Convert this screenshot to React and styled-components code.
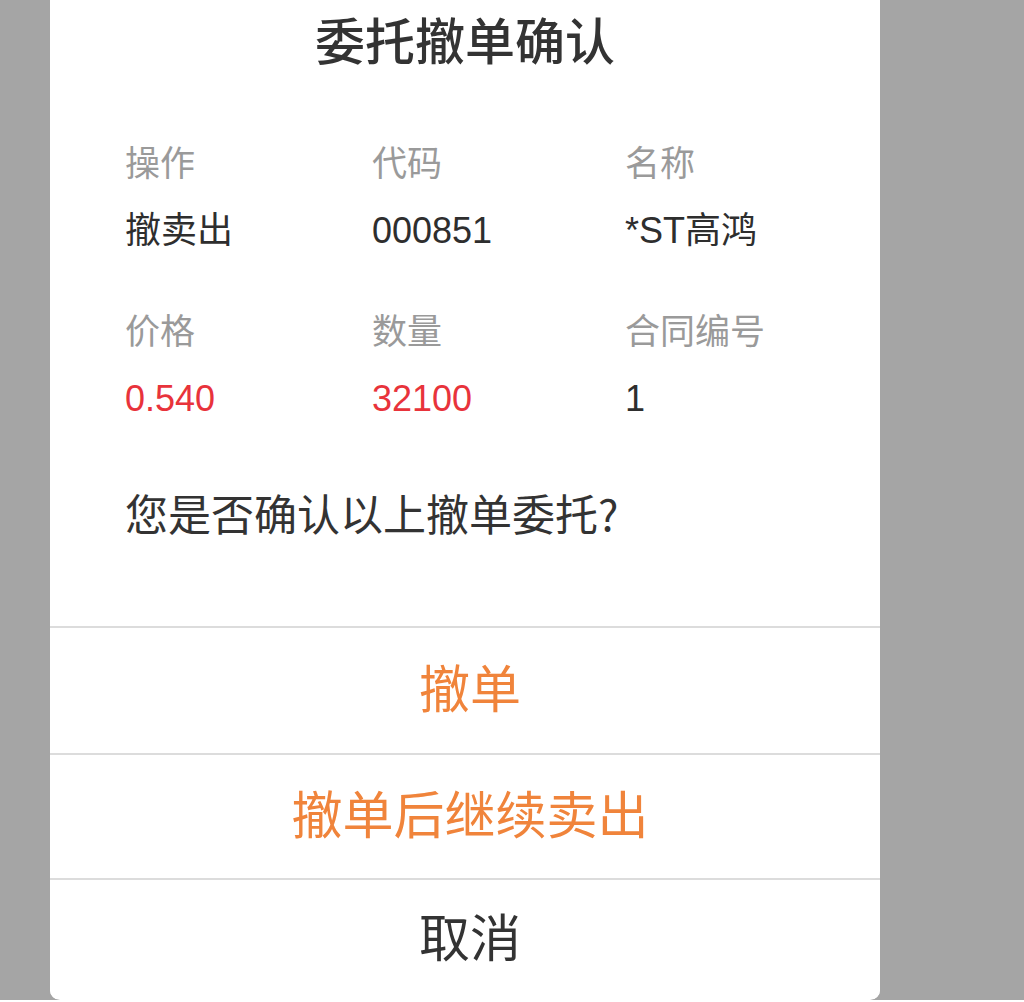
import React from 'react';
import styled, { createGlobalStyle } from 'styled-components';

const Global = createGlobalStyle`
  html, body { margin: 0; padding: 0; background: #fff; }
  * { box-sizing: border-box; }
  body {
    font-family: "Liberation Sans", "Noto Sans CJK SC", sans-serif;
  }
`;

const Overlay = styled.div`
  height: 1000px;
  background: #a5a5a5;
  padding: 0 144px 0 50px;
  overflow: hidden;
`;

const Dialog = styled.div`
  width: 830px;
  height: 1000px;
  background: #fff;
  border-radius: 0 0 10px 10px;
  overflow: hidden;
  display: flex;
  flex-direction: column;
`;

const Title = styled.h1`
  margin: 0;
  padding-top: 3px;
  font-size: 50px;
  line-height: 70px;
  font-weight: 500;
  color: #333;
  text-align: center;
  font-family: "Noto Sans CJK SC", sans-serif;
`;

const Body = styled.div`
  padding: 63px 0 86px 75px;
`;

const Grid = styled.div`
  display: grid;
  grid-template-columns: 247px 253px 1fr;
  row-gap: 48px;
`;

const Cell = styled.div`
  display: flex;
  flex-direction: column;
  gap: 20px;
`;

const Label = styled.div`
  font-size: 35px;
  line-height: 50px;
  color: #9a9a9a;
  font-family: "Noto Sans CJK SC", sans-serif;
`;

const Value = styled.div`
  font-size: 36px;
  line-height: 50px;
  color: ${p => (p.$red ? '#e8333b' : '#2e2e2e')};
`;

const Question = styled.p`
  margin: 60px 0 0;
  font-size: 43px;
  line-height: 56px;
  color: #333;
  font-family: "Noto Sans CJK SC", sans-serif;
`;

const Action = styled.button`
  flex: none;
  height: ${p => p.$h}px;
  border: none;
  border-top: 2px solid #dcdcdc;
  background: #fff;
  padding: 0 0 9px 10px;
  font-size: 51px;
  font-family: "Noto Sans CJK SC", sans-serif;
  color: ${p => (p.$muted ? '#333' : '#f0843b')};
  cursor: pointer;
`;

const info = [
  { label: '操作', value: '撤卖出' },
  { label: '代码', value: '000851' },
  { label: '名称', value: '*ST高鸿' },
  { label: '价格', value: '0.540', red: true },
  { label: '数量', value: '32100', red: true },
  { label: '合同编号', value: '1' },
];

export default function App() {
  return (
    <>
      <Global />
      <Overlay>
        <Dialog>
          <Title>委托撤单确认</Title>
          <Body>
            <Grid>
              {info.map(item => (
                <Cell key={item.label}>
                  <Label>{item.label}</Label>
                  <Value $red={item.red}>{item.value}</Value>
                </Cell>
              ))}
            </Grid>
            <Question>您是否确认以上撤单委托?</Question>
          </Body>
          <Action $h={127}>撤单</Action>
          <Action $h={125}>撤单后继续卖出</Action>
          <Action $h={121} $muted>取消</Action>
        </Dialog>
      </Overlay>
    </>
  );
}
